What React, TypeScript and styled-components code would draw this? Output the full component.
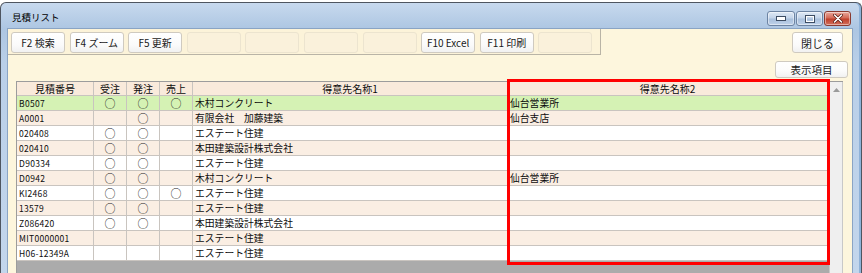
import { FC } from 'react'
import styled, { createGlobalStyle } from 'styled-components'


const GlobalStyle = createGlobalStyle`
  html, body {
    margin: 0;
    padding: 0;
    background: #ffffff;
  }
  body {
    font-family: "Noto Sans CJK JP", "Liberation Sans", sans-serif;
    color: #111;
  }
  * {
    box-sizing: border-box;
  }
`

// window frame

const Window = styled.div`
  width: 862px;
  height: 273px;
  padding-top: 2px;
  overflow: hidden;
`

const Frame = styled.div`
  height: 100%;
  display: flex;
  flex-direction: column;
  border: 1px solid #4e5560;
  border-bottom: none;
  border-radius: 6px 6px 0 0;
  padding: 0 8px 0 6px;
  background: linear-gradient(to bottom, #c7d9ee 0px, #adc6e2 26px, #b9cfe8 60px, #c3d6ec 100%);
  box-shadow: inset -2px 0 0 #8fb2d8;
`

const TitleBar = styled.div`
  height: 25px;
  flex: none;
  display: flex;
  justify-content: space-between;
  align-items: flex-start;
`

const Title = styled.div`
  padding: 8px 0 0 5px;
  font-size: 9.5px;
  line-height: 12px;
  color: #000;
`

const Captions = styled.div`
  display: flex;
  gap: 1px;
  padding: 8px 2px 0 0;
`

const CaptionBtn = styled.div<{ $close?: boolean; $w: number }>`
  width: ${(p) => p.$w}px;
  height: 15px;
  display: flex;
  align-items: center;
  justify-content: center;
  border: 1px solid ${(p) => (p.$close ? '#8a3a30' : '#6d84a3')};
  border-radius: 3px;
  background: ${(p) =>
    p.$close
      ? 'linear-gradient(to bottom, #e9a89c 0%, #d46a58 45%, #c0402c 55%, #d2705c 100%)'
      : 'linear-gradient(to bottom, #dfe9f5 0%, #c4d5ea 45%, #a9c0dc 55%, #bfd2ea 100%)'};
  box-shadow: inset 0 0 0 1px rgba(255, 255, 255, 0.45);
`

// body

const Body = styled.div`
  flex: 1;
  display: flex;
  flex-direction: column;
  background: #fdf6dd;
  border: 1px solid #8aa4c4;
  border-bottom: none;
`

const ToolbarRow = styled.div`
  display: flex;
  justify-content: space-between;
  align-items: flex-start;
`

const Toolbar = styled.div`
  display: flex;
  gap: 4.6px;
  padding: 3px 8px 1px 3px;
  background: #fcf3d9;
  border-right: 1px solid #b9b4a6;
  border-bottom: 1px solid #b9b4a6;
`

const FnButton = styled.div<{ $empty?: boolean }>`
  width: 54px;
  height: 21px;
  display: flex;
  align-items: center;
  justify-content: center;
  font-size: 10px;
  border-radius: 3px;
  border: 1px solid ${(p) => (p.$empty ? '#ece4cf' : '#cfcac0')};
  background: ${(p) => (p.$empty ? '#faf1db' : 'linear-gradient(to bottom, #ffffff 0%, #fbfbfb 60%, #f1f1f1 100%)')};
  color: #1a1a1a;
  white-space: nowrap;
`

const CloseButton = styled(FnButton)`
  width: 51px;
  margin: 3px 9px 0 0;
  font-size: 11px;
`

const OptionRow = styled.div`
  display: flex;
  justify-content: flex-end;
  padding: 6px 4px 0 0;
`

const OptionButton = styled(FnButton)`
  width: 73px;
  height: 17px;
  font-size: 10.5px;
`

// grid

const GridArea = styled.div`
  position: relative;
  flex: 1;
  display: flex;
  margin: 3px 9px 0 8px;
  border-top: 1px solid #9c9c9c;
  border-left: 1px solid #9c9c9c;
  background: #ababab;
`

const Table = styled.div`
  flex: 1;
  display: flex;
  flex-direction: column;
`

const Row = styled.div<{ $bg: string; $h: number }>`
  display: grid;
  grid-template-columns: 77px 33px 33px 33px 315px 320px;
  height: ${(p) => p.$h}px;
  background: ${(p) => p.$bg};
`

const Cell = styled.div<{ $mono?: boolean }>`
  display: flex;
  align-items: center;
  justify-content: flex-start;
  padding: 0 2px;
  border-right: 1px solid #c9c4bf;
  border-bottom: 1px solid #c9c4bf;
  font-size: ${(p) => (p.$mono ? '8.5px' : '9.8px')};
  letter-spacing: ${(p) => (p.$mono ? '0.3px' : '0')};
  white-space: nowrap;
  color: #0c0c0c;
  line-height: 12px;
`

const MarkCell = styled(Cell)`
  justify-content: center;
  font-size: 11px;
  line-height: 12px;
  color: #222;
`

const HeadCell = styled(Cell)`
  justify-content: center;
  font-size: 10px;
`

const ScrollBar = styled.div`
  width: 14px;
  flex: none;
  display: flex;
  justify-content: center;
  padding-top: 6px;
  background: #efefef;
  border-left: 1px solid #c8c8c8;
  border-right: 1px solid #c8c8c8;
`

const Highlight = styled.div`
  position: absolute;
  left: 490px;
  top: -3px;
  width: 323px;
  height: 186px;
  border: 3px solid #ff0000;
  pointer-events: none;
`


interface RowData {
  code: string
  juchu: boolean
  hatchu: boolean
  uriage: boolean
  name1: string
  name2: string
}

const rows: RowData[] = [
  { code: 'B0507', juchu: true, hatchu: true, uriage: true, name1: '木村コンクリート', name2: '仙台営業所' },
  { code: 'A0001', juchu: false, hatchu: true, uriage: false, name1: '有限会社　加藤建築', name2: '仙台支店' },
  { code: '020408', juchu: true, hatchu: true, uriage: false, name1: 'エステート住建', name2: '' },
  { code: '020410', juchu: true, hatchu: true, uriage: false, name1: '本田建築設計株式会社', name2: '' },
  { code: 'D90334', juchu: true, hatchu: true, uriage: false, name1: 'エステート住建', name2: '' },
  { code: 'D0942', juchu: true, hatchu: true, uriage: false, name1: '木村コンクリート', name2: '仙台営業所' },
  { code: 'KI2468', juchu: true, hatchu: true, uriage: true, name1: 'エステート住建', name2: '' },
  { code: '13579', juchu: true, hatchu: true, uriage: false, name1: 'エステート住建', name2: '' },
  { code: 'Z086420', juchu: true, hatchu: true, uriage: false, name1: '本田建築設計株式会社', name2: '' },
  { code: 'MIT0000001', juchu: false, hatchu: false, uriage: false, name1: 'エステート住建', name2: '' },
  { code: 'H06-12349A', juchu: false, hatchu: false, uriage: false, name1: 'エステート住建', name2: '' },
]

const toolButtons = ['F2 検索', 'F4 ズーム', 'F5 更新', '', '', '', '', 'F10 Excel', 'F11 印刷', '']

const rowColor = (index: number) => {
  if (index === 0) return '#d5f2b4'
  return index % 2 === 1 ? '#faeee3' : '#ffffff'
}

const mark = (on: boolean) => (on ? '○' : '')


const App: FC = () => {

  return (
    <Window>
      <GlobalStyle />
      <Frame>

        <TitleBar>
          <Title>見積リスト</Title>
          <Captions>
            <CaptionBtn $w={28}>
              <svg width="10" height="5" viewBox="0 0 10 5">
                <rect x="0.5" y="0.5" width="9" height="4" fill="#fff" stroke="#3d4d63" />
              </svg>
            </CaptionBtn>
            <CaptionBtn $w={27}>
              <svg width="10" height="8" viewBox="0 0 10 8">
                <rect x="0.5" y="0.5" width="9" height="7" fill="none" stroke="#3d4d63" />
                <rect x="1.5" y="1.5" width="7" height="5" fill="none" stroke="#fff" />
              </svg>
            </CaptionBtn>
            <CaptionBtn $close $w={27}>
              <svg width="10" height="9" viewBox="0 0 10 9">
                <path d="M1.5 1 L8.5 8 M8.5 1 L1.5 8" stroke="#5a1a10" strokeWidth="3" strokeLinecap="round" />
                <path d="M1.5 1 L8.5 8 M8.5 1 L1.5 8" stroke="#fff" strokeWidth="1.6" strokeLinecap="round" />
              </svg>
            </CaptionBtn>
          </Captions>
        </TitleBar>

        <Body>
          <ToolbarRow>
            <Toolbar>
              {toolButtons.map((label, index) => (
                <FnButton key={index} $empty={label === ''}>{label}</FnButton>
              ))}
            </Toolbar>
            <CloseButton>閉じる</CloseButton>
          </ToolbarRow>

          <OptionRow>
            <OptionButton>表示項目</OptionButton>
          </OptionRow>

          <GridArea>
            <Table>
              <Row $bg="#f9eadb" $h={14}>
                <HeadCell>見積番号</HeadCell>
                <HeadCell>受注</HeadCell>
                <HeadCell>発注</HeadCell>
                <HeadCell>売上</HeadCell>
                <HeadCell>得意先名称1</HeadCell>
                <HeadCell>得意先名称2</HeadCell>
              </Row>

              {rows.map((row, index) => (
                <Row key={row.code} $bg={rowColor(index)} $h={15}>
                  <Cell $mono>{row.code}</Cell>
                  <MarkCell>{mark(row.juchu)}</MarkCell>
                  <MarkCell>{mark(row.hatchu)}</MarkCell>
                  <MarkCell>{mark(row.uriage)}</MarkCell>
                  <Cell>{row.name1}</Cell>
                  <Cell>{row.name2}</Cell>
                </Row>
              ))}
            </Table>

            <ScrollBar>
              <svg width="7" height="4" viewBox="0 0 7 4">
                <path d="M0 4 L3.5 0 L7 4 Z" fill="#9a9a9a" />
              </svg>
            </ScrollBar>

            <Highlight />
          </GridArea>
        </Body>

      </Frame>
    </Window>
  )
}

export default App
